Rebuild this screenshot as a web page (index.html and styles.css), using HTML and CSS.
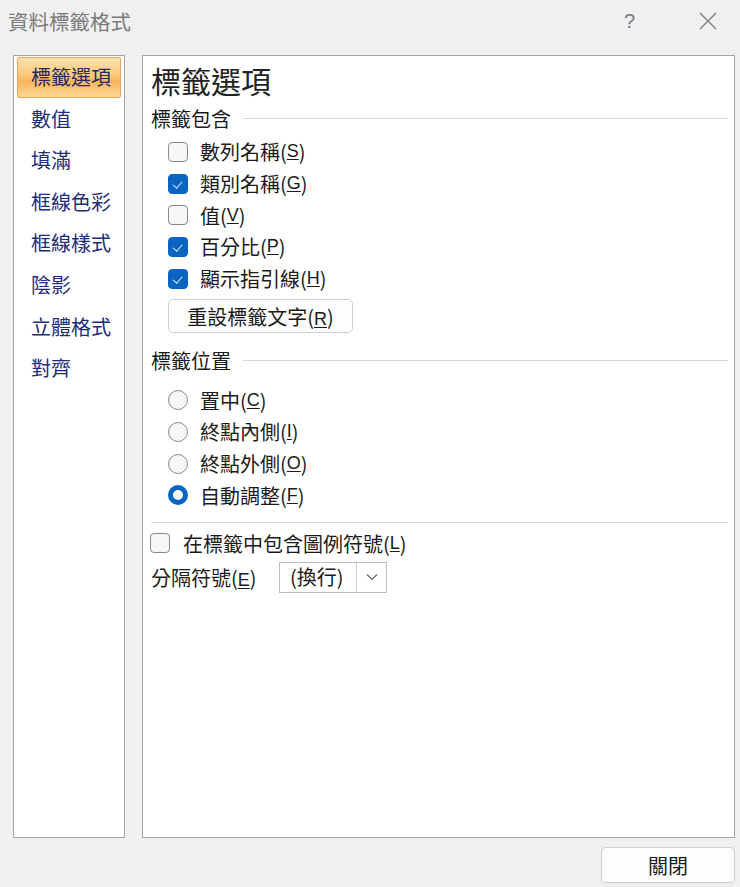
FILE: index.html
```html
<!DOCTYPE html>
<html lang="zh-Hant">
<head>
  <meta charset="UTF-8" />
  <title>資料標籤格式</title>
  <link rel="stylesheet" href="styles.css">
</head>
<body>
  <div class="dialog">
    <div class="titlebar">
      <span class="title">資料標籤格式</span>
      <span class="help">?</span>
      <svg class="close-x" width="18" height="18" viewBox="0 0 18 18">
        <path d="M1 1 L17 17 M17 1 L1 17" stroke="#7a7a7a" stroke-width="1.3" fill="none"/>
      </svg>
    </div>

    <div class="main">
      <ul class="nav">
        <li class="active">標籤選項</li>
        <li>數值</li>
        <li>填滿</li>
        <li>框線色彩</li>
        <li>框線樣式</li>
        <li>陰影</li>
        <li>立體格式</li>
        <li>對齊</li>
      </ul>

      <div class="panel">
        <h1>標籤選項</h1>

        <div class="group-head"><span>標籤包含</span></div>
        <div class="options">
          <label class="opt"><span class="box"></span>數列名稱(<u>S</u>)</label>
          <label class="opt"><span class="box on"></span>類別名稱(<u>G</u>)</label>
          <label class="opt"><span class="box"></span>值(<u>V</u>)</label>
          <label class="opt"><span class="box on"></span>百分比(<u>P</u>)</label>
          <label class="opt"><span class="box on"></span>顯示指引線(<u>H</u>)</label>
          <button class="btn reset">重設標籤文字(<u>R</u>)</button>
        </div>

        <div class="group-head pos"><span>標籤位置</span></div>
        <div class="options radios">
          <label class="opt"><span class="radio"></span>置中(<u>C</u>)</label>
          <label class="opt"><span class="radio"></span>終點內側(<u>I</u>)</label>
          <label class="opt"><span class="radio"></span>終點外側(<u>O</u>)</label>
          <label class="opt"><span class="radio on"></span>自動調整(<u>F</u>)</label>
        </div>

        <div class="sep"></div>

        <label class="opt legend"><span class="box"></span>在標籤中包含圖例符號(<u>L</u>)</label>

        <div class="sep-row">
          <span class="sep-label">分隔符號(<u>E</u>)</span>
          <div class="select">
            <span class="value">(換行)</span>
            <span class="arrow">
              <svg width="12" height="8" viewBox="0 0 12 8"><path d="M1 1.5 L6 6.5 L11 1.5" stroke="#606060" stroke-width="1.1" fill="none"/></svg>
            </span>
          </div>
        </div>
      </div>
    </div>

    <div class="footer">
      <button class="btn close">關閉</button>
    </div>
  </div>
</body>
</html>
```

FILE: styles.css
```css
body {
  margin: 0;
  background: #f0f0f0;
  font-family: "Noto Sans CJK TC", "Noto Sans", sans-serif;
  color: #1a1a1a;
}
.dialog {
  width: 740px;
  height: 887px;
  display: flex;
  flex-direction: column;
}
.titlebar {
  height: 42px;
  display: flex;
  align-items: center;
  padding: 0 0 0 8px;
}
.title {
  font-size: 20.5px;
  color: #7a7a7a;
  flex: 1;
}
.help {
  font-size: 20px;
  color: #7a7a7a;
  font-family: "Liberation Sans", sans-serif;
  margin-right: 64px;
}
.close-x {
  margin-right: 23px;
}
.main {
  display: flex;
  margin-top: 13px;
  padding-left: 13px;
  height: 783px;
}
.nav {
  list-style: none;
  margin: 0;
  padding: 0;
  width: 110px;
  background: #fff;
  border: 1px solid #a5a5a5;
}
.nav li {
  height: 41.6px;
  line-height: 41.6px;
  font-size: 20px;
  color: #1f2d7c;
  padding-left: 17px;
  box-sizing: border-box;
}
.nav li.active {
  margin: 1px 3px 0;
  height: 40.6px;
  line-height: 38px;
  padding-left: 13px;
  color: #262a5e;
  border: 1px solid #e9a65a;
  border-radius: 2px;
  background: linear-gradient(to bottom, #fde2b0 0%, #fbc878 45%, #f8b65c 60%, #fcd796 100%);
}
.panel {
  margin-left: 17px;
  width: 593px;
  background: #fff;
  border: 1px solid #a5a5a5;
  padding: 6px 6px 0 8px;
  box-sizing: border-box;
}
h1 {
  margin: 0;
  font-size: 30px;
  font-weight: normal;
  line-height: 36px;
  color: #222;
}
.group-head {
  display: flex;
  align-items: center;
  height: 26px;
  margin-top: 7px;
  font-size: 20px;
}
.group-head::after {
  content: "";
  flex: 1;
  height: 1px;
  background: #d9d9d9;
  margin-left: 12px;
}
.group-head.pos {
  margin-top: 14px;
}
.options {
  padding-left: 17px;
  margin-top: 5px;
}
.radios {
  margin-top: 11px;
}
.opt {
  display: flex;
  align-items: center;
  height: 31.7px;
  font-size: 20px;
}
u {
  text-decoration: underline;
  text-underline-offset: 2px;
  font-family: "Liberation Sans", sans-serif;
  font-size: 18px;
}
.box {
  width: 18px;
  height: 18px;
  border: 1px solid #8a8a8a;
  border-radius: 4px;
  background: #f6f6f6;
  margin-right: 12px;
  position: relative;
}
.box.on {
  background: #0a64c2;
  border-color: #0a64c2;
}
.box.on::after {
  content: "";
  position: absolute;
  left: 5px;
  top: 3px;
  width: 6px;
  height: 10px;
  border: solid #fff;
  border-width: 0 1.5px 1.5px 0;
  transform: rotate(40deg) scale(0.8);
}
.radio {
  width: 18px;
  height: 18px;
  border: 1px solid #8a8a8a;
  border-radius: 50%;
  background: #f6f6f6;
  margin-right: 12px;
}
.radio.on {
  width: 10px;
  height: 10px;
  border: 5px solid #0a64c2;
  background: #fff;
}
.btn {
  font-family: "Noto Sans CJK TC", sans-serif;
  font-size: 20px;
  color: #1a1a1a;
  background: #fdfdfd;
  border: 1px solid #cfcfcf;
  border-radius: 5px;
}
.reset {
  margin-top: 5px;
  height: 34px;
  width: 185px;
  padding: 0;
}
.sep {
  height: 1px;
  background: #d9d9d9;
  margin: 11px 0 0 0;
}
.legend {
  margin-top: 4px;
  margin-left: -1px;
}
.legend .box {
  margin-right: 13px;
}
.sep-row {
  display: flex;
  align-items: center;
  height: 31px;
  margin-top: 3px;
  font-size: 20px;
}
.sep-label {
  width: 128px;
}
.select {
  display: flex;
  height: 29px;
  border: 1px solid #bdbdbd;
  background: #fff;
}
.select .value {
  width: 66px;
  padding-left: 10px;
  line-height: 28px;
  font-size: 20px;
  border-right: 1px solid #d0d0d0;
}
.select .arrow {
  width: 29px;
  display: flex;
  align-items: center;
  justify-content: center;
}
.footer {
  display: flex;
  justify-content: flex-end;
  padding: 9px 5px 0 0;
}
.close {
  width: 134px;
  height: 36px;
  padding: 0;
}
```
